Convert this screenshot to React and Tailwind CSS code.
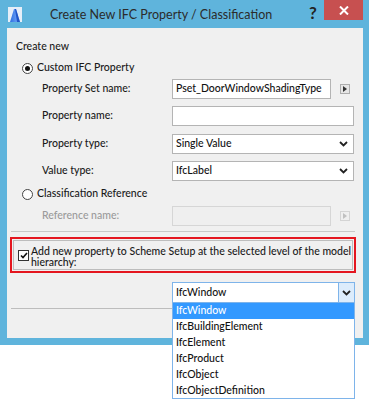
import React from 'react';

const font = { fontFamily: 'Lato, "Noto Sans", Arial, sans-serif' };

const Chevron = ({ className = '' }) => (
    <svg width="9" height="6" viewBox="0 0 9 6" className={className}>
        <path d="M1 1 L4.5 4.5 L8 1" fill="none" stroke="#222" strokeWidth="1.8" />
    </svg>
);

const ArrowButton = ({ disabled }) => (
    <div className={`w-[10px] h-[10px] flex items-center justify-center border ${disabled ? 'border-[#d4d4d4] bg-[#efefef]' : 'border-[#adadad] bg-[#e6e6e6]'}`}>
        <svg width="4" height="6" viewBox="0 0 4 6">
            <path d="M0 0 L4 3 L0 6 Z" fill={disabled ? '#c0c0c0' : '#333'} />
        </svg>
    </div>
);

const Radio = ({ checked }) => (
    <div className="w-[11px] h-[11px] rounded-full border border-[#444] bg-white flex items-center justify-center">
        {checked && <div className="w-[5px] h-[5px] rounded-full bg-[#111]" />}
    </div>
);

// one label + field row of the form
const FieldRow = ({ label, disabled, children, className = '' }) => (
    <div className={`flex items-center ${className}`}>
        <div className={`w-[130px] pl-[35px] box-content text-[10.5px] font-medium ${disabled ? 'text-[#9a9a9a]' : 'text-[#1a1a1a]'}`}>{label}</div>
        <div className="flex items-center">{children}</div>
    </div>
);

const TextBox = ({ value, wide, disabled, select }) => (
    <div className={`h-[20px] ${wide ? 'w-[182px]' : 'w-[159px]'} border flex items-center justify-between px-[3px] text-[10.5px] font-medium ${disabled ? 'bg-[#efefef] border-[#d6d6d6]' : 'bg-white border-[#b4b4b4]'}`}>
        <span className="text-[#111] whitespace-nowrap">{value}</span>
        {select && <Chevron className="mr-[2px]" />}
    </div>
);

const items = ['IfcWindow', 'IfcBuildingElement', 'IfcElement', 'IfcProduct', 'IfcObject', 'IfcObjectDefinition'];

const App = () => {
    return (
        <div className="w-[369px] h-[400px] bg-white relative overflow-hidden" style={font}>
            {/* window frame */}
            <div className="w-[369px] h-[345px] bg-[#5fb4dc] flex flex-col">
                {/* title bar */}
                <div className="h-[28px] flex items-start relative">
                    <div className="ml-[8px] mt-[7px] w-[14px] h-[15px] bg-[#e6eef8] flex items-end justify-center">
                        <svg width="12" height="14" viewBox="0 0 12 14">
                            <defs>
                                <linearGradient id="g" x1="0" y1="0" x2="1" y2="0">
                                    <stop offset="0" stopColor="#2c6fe0" />
                                    <stop offset="1" stopColor="#7fb0ff" />
                                </linearGradient>
                            </defs>
                            <path d="M5 1 L7 1 L11 14 L1 14 Z" fill="url(#g)" />
                            <path d="M6 1 L7 1 L11 14 L8 14 Z" fill="#1f55c8" />
                        </svg>
                    </div>
                    <div className="ml-[28px] mt-[5px] text-[12.5px] text-[#2b2b2b] leading-[20px] whitespace-nowrap">Create New IFC Property / Classification</div>
                    <div className="absolute left-[309px] top-[3px] text-[17px] font-bold text-[#222] leading-[20px]">?</div>
                    <div className="absolute left-[324px] top-0 w-[39px] h-[20px] bg-[#c75050] flex items-center justify-center">
                        <svg width="10" height="9" viewBox="0 0 10 9">
                            <path d="M1 0.5 L9 8.5 M9 0.5 L1 8.5" stroke="white" strokeWidth="2" />
                        </svg>
                    </div>
                </div>

                {/* client area */}
                <div className="ml-[7px] mr-[6px] h-[310px] bg-[#f0f0f0] flex flex-col">
                    <div className="h-[16px] mt-[11px] pl-[9px] flex items-center text-[10.5px] font-medium text-[#1a1a1a]">Create new</div>

                    <div className="h-[16px] mt-[5px] pl-[15px] flex items-center gap-[4px] text-[10.5px] font-medium text-[#1a1a1a]">
                        <Radio checked />
                        <span>Custom IFC Property</span>
                    </div>

                    <FieldRow label="Property Set name:" className="mt-[3px] h-[20px]">
                        <TextBox value="Pset_DoorWindowShadingType" />
                        <div className="ml-[9px]"><ArrowButton /></div>
                    </FieldRow>
                    <FieldRow label="Property name:" className="mt-[7px] h-[20px]">
                        <TextBox value="" wide />
                    </FieldRow>
                    <FieldRow label="Property type:" className="mt-[8px] h-[20px]">
                        <TextBox value="Single Value" wide select />
                    </FieldRow>
                    <FieldRow label="Value type:" className="mt-[7px] h-[20px]">
                        <TextBox value="IfcLabel" wide select />
                    </FieldRow>

                    <div className="h-[16px] mt-[5px] pl-[15px] flex items-center gap-[4px] text-[10.5px] font-medium text-[#1a1a1a]">
                        <Radio />
                        <span>Classification Reference</span>
                    </div>

                    <FieldRow label="Reference name:" disabled className="mt-[4px] h-[20px]">
                        <TextBox value="" disabled />
                        <div className="ml-[9px]"><ArrowButton disabled /></div>
                    </FieldRow>

                    <div className="mt-[5px] ml-[4px] mr-[8px] h-[1px] bg-[#c8c8c8]" />

                    {/* highlighted checkbox */}
                    <div className="mt-[5px] ml-[3px] mr-[7px] h-[36px] border-2 border-[#e4161f] p-[1px]">
                        <div className="h-full border border-[#bdbdbd] flex items-start pl-[4px] pt-[5px]">
                            <div className="mt-[4px] w-[11px] h-[11px] border border-[#333] bg-white flex items-center justify-center shrink-0">
                                <svg width="8" height="7" viewBox="0 0 8 7">
                                    <path d="M1 3.5 L3 5.5 L7 1" fill="none" stroke="#111" strokeWidth="1.6" />
                                </svg>
                            </div>
                            <div className="ml-[2px] text-[10.5px] font-medium leading-[11px] text-[#1a1a1a]">
                                Add new property to Scheme Setup at the selected level of the model hierarchy:
                            </div>
                        </div>
                    </div>

                    {/* level select */}
                    <div className="mt-[9px] ml-[165px] w-[183px] h-[21px] border border-[#7eb4ea] bg-white flex items-center">
                        <span className="flex-1 pl-[3px] text-[10.5px] font-medium text-[#111]">IfcWindow</span>
                        <div className="w-[16px] h-full bg-[#dcecfc] border-l border-[#7eb4ea] flex items-center justify-center">
                            <Chevron />
                        </div>
                    </div>

                    <div className="mt-[5px] ml-[4px] mr-[8px] h-[1px] bg-[#bdbdbd]" />
                </div>
            </div>

            {/* open dropdown list */}
            <div className="absolute left-[172px] top-[303px] w-[183px] h-[96px] bg-white border border-[#7eb4ea] border-t-0">
                {items.map((item, i) => (
                    <div
                        key={item}
                        className={`h-[16px] pl-[3px] flex items-center text-[10.5px] font-medium ${i === 0 ? 'bg-[#3399ff] text-white' : 'text-[#111]'}`}
                    >
                        {item}
                    </div>
                ))}
            </div>
        </div>
    );
};

export default App;
